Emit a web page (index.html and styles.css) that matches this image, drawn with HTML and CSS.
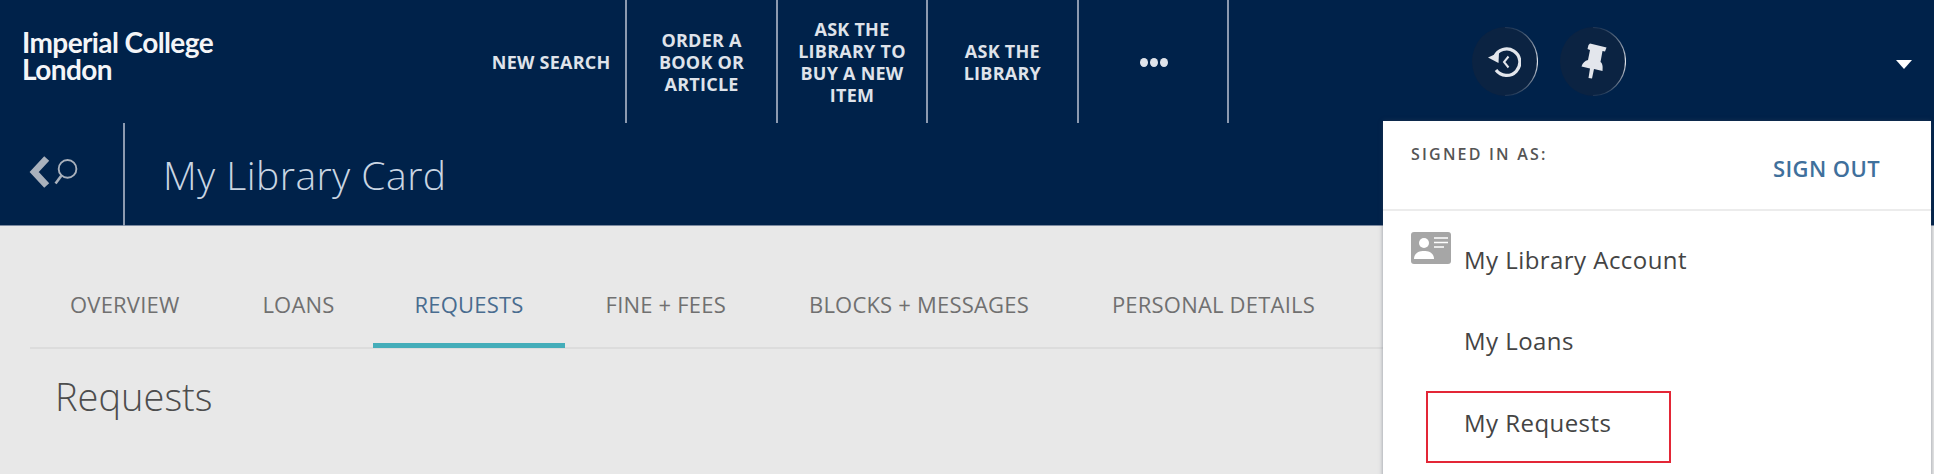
FILE: index.html
```html
<!DOCTYPE html>
<html lang="en">
<head>
<meta charset="utf-8">
<title>My Library Card</title>
<link rel="stylesheet" href="styles.css">
</head>
<body>
<div class="page">
  <header class="header">
    <div class="topbar">
      <a class="logo">Imperial College<br>London</a>
      <nav class="nav">
        <a class="nav-item">NEW SEARCH</a>
        <a class="nav-item">ORDER A<br>BOOK OR<br>ARTICLE</a>
        <a class="nav-item">ASK THE<br>LIBRARY TO<br>BUY A NEW<br>ITEM</a>
        <a class="nav-item">ASK THE<br>LIBRARY</a>
        <a class="nav-item"><span class="dots"><i></i><i></i><i></i></span></a>
      </nav>
      <div class="tools">
        <a class="round-btn">
          <svg class="ring" viewBox="0 0 66 69"><defs><linearGradient id="fade1" x1="0" y1="0" x2="0" y2="1"><stop offset="0" stop-color="#dfe3ea" stop-opacity="0.1"/><stop offset="0.5" stop-color="#dfe3ea"/><stop offset="1" stop-color="#dfe3ea" stop-opacity="0.1"/></linearGradient></defs><ellipse cx="33" cy="34.5" rx="33" ry="34.5" fill="#0b2342"/><path d="M33 0.5A32.5 34 0 0 1 33 68.5" fill="none" stroke="url(#fade1)" stroke-width="1.2"/></svg>
          <svg class="glyph glyph-history" viewBox="0 0 33 30"><path d="M6.5 10A13.2 13.2 0 1 1 8 23" fill="none" stroke="#e3e6ec" stroke-width="3.2"/><path d="M0 10.5L11 5.5L10.5 16Z" fill="#e3e6ec"/><path d="M20.500 9.500L16 15L20.500 20.500" fill="none" stroke="#e3e6ec" stroke-width="2"/></svg>
        </a>
        <a class="round-btn">
          <svg class="ring" viewBox="0 0 66 69"><defs><linearGradient id="fade2" x1="0" y1="0" x2="0" y2="1"><stop offset="0" stop-color="#dfe3ea" stop-opacity="0.1"/><stop offset="0.5" stop-color="#dfe3ea"/><stop offset="1" stop-color="#dfe3ea" stop-opacity="0.1"/></linearGradient></defs><ellipse cx="33" cy="34.5" rx="33" ry="34.5" fill="#0b2342"/><path d="M33 0.5A32.5 34 0 0 1 33 68.5" fill="none" stroke="url(#fade2)" stroke-width="1.2"/></svg>
          <svg class="glyph glyph-pin" viewBox="0 0 26 36"><path d="M9 0.500L25.500 4.500L24 8.500L21.500 8L19.500 19C21.500 20.500 22 23 21.500 28L13 26L11 35.500L7.500 35L9 25.500L0.500 23.500C1.500 20 4 17.500 7 17L9 7L6.500 6L7.500 2Z" fill="#e3e6ec"/></svg>
        </a>
      </div>
      <span class="caret"></span>
    </div>
    <div class="subbar">
      <a class="back">
        <svg class="back-icon" viewBox="0 0 48 32"><path d="M17 3L5 16L17 29" fill="none" stroke="#a9b1bc" stroke-width="6.500"/><circle cx="37" cy="13" r="8.500" fill="none" stroke="#a9b1bc" stroke-width="1.800"/><path d="M31 19.500L25.500 27" stroke="#a9b1bc" stroke-width="2.500"/></svg>
      </a>
      <h1 class="page-title">My Library Card</h1>
    </div>
  </header>
  <main class="main">
    <ul class="tabs">
      <li class="tab">OVERVIEW</li>
      <li class="tab">LOANS</li>
      <li class="tab tab-active">REQUESTS</li>
      <li class="tab">FINE + FEES</li>
      <li class="tab">BLOCKS + MESSAGES</li>
      <li class="tab">PERSONAL DETAILS</li>
    </ul>
    <h2 class="section-title">Requests</h2>
  </main>
  <aside class="menu">
    <div class="menu-head">
      <span class="signed">SIGNED IN AS:</span>
      <a class="signout">SIGN OUT</a>
    </div>
    <ul class="menu-list">
      <li class="menu-item">
        <svg class="card-icon" viewBox="0 0 40 32"><rect width="40" height="32" rx="3" fill="#a6a6a6"/><circle cx="13" cy="11" r="5" fill="#fff"/><path d="M3 27C3 21 8 19 13 19S23 21 23 27Z" fill="#fff"/><path d="M23 6H37M23 10.500H37M23 15H33" stroke="#fff" stroke-width="1.500"/></svg>
        My Library Account
      </li>
      <li class="menu-item">My Loans</li>
      <li class="menu-item menu-item-marked">My Requests</li>
    </ul>
  </aside>
</div>
</body>
</html>
```
FILE: styles.css
```css
* { box-sizing: border-box; }
html, body { margin: 0; padding: 0; }
body { font-family: "Open Sans", "Noto Sans", sans-serif; background: #e8e8e8; overflow: hidden; }
.page { position: relative; width: 1934px; height: 474px; overflow: hidden; }
.header { background: #00224a; height: 226px; border-bottom: 1px solid #7c8aa0; }
.topbar { display: flex; align-items: stretch; height: 123px; }
.logo { width: 477px; padding: 29px 0 0 22px; font-family: "Lato", sans-serif; font-weight: 700; font-size: 28px; line-height: 27px; letter-spacing: -0.6px; color: #f4f5f7; }
.nav { display: flex; }
.nav-item { width: 150.4px; display: flex; align-items: center; justify-content: center; text-align: center; border-right: 2px solid #8c9ab0; font-size: 18px; font-weight: 700; line-height: 22px; font-stretch: 95%; letter-spacing: 0.25px; color: #dfe3ea; }
.dots { display: flex; gap: 2px; margin: 1px 0 0 3px; }
.dots i { width: 8px; height: 9px; border-radius: 50%; background: #dfe3ea; }
.tools { display: flex; gap: 22px; margin-left: 243px; padding-top: 27px; }
.round-btn { position: relative; display: block; width: 66px; height: 69px; }
.ring { position: absolute; inset: 0; width: 66px; height: 69px; }
.glyph { position: absolute; }
.glyph-history { left: 16px; top: 20px; width: 33px; height: 30px; }
.glyph-pin { left: 21px; top: 16px; width: 26px; height: 36px; }
.caret { margin-left: auto; margin-right: 22px; margin-top: 60px; width: 0; height: 0; border-left: 8.500px solid transparent; border-right: 8.500px solid transparent; border-top: 9px solid #fff; }
.subbar { display: flex; height: 102px; }
.back { width: 125px; height: 103px; padding: 32px 0 0 29px; border-right: 2px solid #8c9ab0; }
.back-icon { display: block; width: 50px; height: 34px; }
.page-title { margin: 0; padding: 30px 0 0 38px; font-size: 39px; font-weight: 300; line-height: 44px; font-stretch: 90%; letter-spacing: 0.5px; color: #c9d5e2; }
.main { padding: 0 0 0 30px; }
.tabs { display: flex; list-style: none; margin: 0; padding: 0; height: 123px; width: 1353px; border-bottom: 2px solid #dcdcdc; }
.tab { height: 122px; padding: 60px 42px 0 41px; font-size: 22px; font-weight: 400; line-height: 36px; font-stretch: 95%; letter-spacing: 0.2px; color: #707070; white-space: nowrap; }
.tab:first-child { padding-left: 40px; padding-right: 42px; }
.tab:nth-child(2) { padding-right: 38px; }
.tab-active { padding-left: 42px; padding-right: 41px; color: #496c8f; border-bottom: 5px solid #44adb9; }
.section-title { margin: 0; padding: 22px 0 0 25px; font-size: 38px; font-weight: 300; line-height: 50px; font-stretch: 90%; letter-spacing: 0; color: #4d4d4d; }
.menu { position: absolute; left: 1383px; top: 121px; width: 548px; height: 360px; background: #fff; box-shadow: 0 0 4px rgba(60, 70, 90, 0.5); }
.menu-head { position: relative; display: flex; justify-content: space-between; height: 90px; padding: 22px 51px 0 28px; border-bottom: 2px solid #ececec; }
.signed { font-size: 16px; font-weight: 600; line-height: 22px; letter-spacing: 2.200px; font-stretch: 100%; color: #555; }
.signout { margin-top: 10px; font-size: 22px; font-weight: 600; line-height: 30px; font-stretch: 100%; letter-spacing: 0.4px; color: #3f709c; }
.menu-list { list-style: none; margin: 0; padding: 8px 0 0; }
.menu-item { position: relative; height: 82px; padding: 21px 0 0 81px; font-size: 24px; font-weight: 400; line-height: 40px; font-stretch: 100%; letter-spacing: 0.45px; color: #444; }
.menu-item + .menu-item { padding-top: 20px; }
.card-icon { position: absolute; left: 28px; top: 13px; width: 40px; height: 32px; }
.menu-item-marked::after { content: ""; box-sizing: border-box; position: absolute; left: 43px; top: 8px; width: 245px; height: 72px; border: 2px solid #e32636; }
```
